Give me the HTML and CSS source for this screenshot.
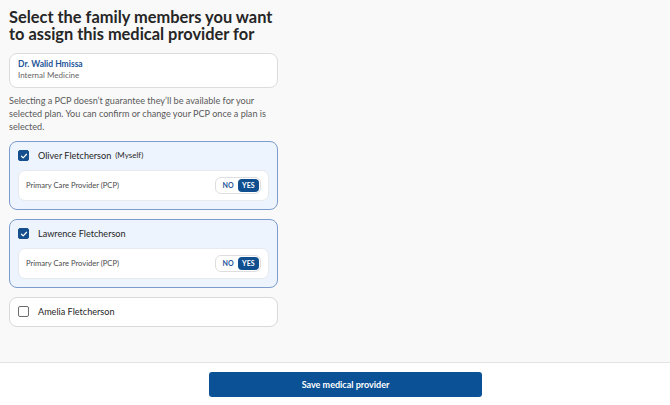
FILE: index.html
```html
<!DOCTYPE html>
<html>
<head>
<meta charset="utf-8">
<link rel="stylesheet" href="styles.css">
</head>
<body>
<div class="page">
  <main class="main">
    <h1 class="title">Select the family members you want to assign this medical provider for</h1>
    <div class="provider">
      <div class="provider-name">Dr. Walid Hmissa</div>
      <div class="provider-spec">Internal Medicine</div>
    </div>
    <p class="note">Selecting a PCP doesn’t guarantee they’ll be available for your selected plan. You can confirm or change your PCP once a plan is selected.</p>
    <div class="members">
      <div class="member selected">
        <div class="member-head">
          <span class="check on"><svg viewBox="0 0 12 12" width="8" height="8"><path d="M2.2 6.3 L4.8 8.8 L9.8 3.4" fill="none" stroke="#fff" stroke-width="1.8" stroke-linecap="round" stroke-linejoin="round"/></svg></span>
          <span class="member-name">Oliver Fletcherson</span>
          <span class="myself">(Myself)</span>
        </div>
        <div class="pcp">
          <span class="pcp-label">Primary Care Provider (PCP)</span>
          <span class="toggle"><span class="opt">NO</span><span class="opt active">YES</span></span>
        </div>
      </div>
      <div class="member selected">
        <div class="member-head">
          <span class="check on"><svg viewBox="0 0 12 12" width="8" height="8"><path d="M2.2 6.3 L4.8 8.8 L9.8 3.4" fill="none" stroke="#fff" stroke-width="1.8" stroke-linecap="round" stroke-linejoin="round"/></svg></span>
          <span class="member-name">Lawrence Fletcherson</span>
        </div>
        <div class="pcp">
          <span class="pcp-label">Primary Care Provider (PCP)</span>
          <span class="toggle"><span class="opt">NO</span><span class="opt active">YES</span></span>
        </div>
      </div>
      <div class="member">
        <div class="member-head">
          <span class="check"></span>
          <span class="member-name">Amelia Fletcherson</span>
        </div>
      </div>
    </div>
  </main>
  <footer class="footer">
    <button class="save">Save medical provider</button>
  </footer>
</div>
</body>
</html>
```

FILE: styles.css
```css
* { box-sizing: border-box; }
html, body { margin: 0; padding: 0; }
body {
  font-family: Lato, "Noto Sans", "Liberation Sans", sans-serif;
  color: #2b2b2b;
  background: #fff;
}
.page {
  width: 670px;
  height: 405px;
  display: flex;
  flex-direction: column;
}
.main {
  flex: 1;
  background: #f9f9f9;
  padding: 8px 9px 0 9px;
  border-bottom: 1px solid #e3e3e3;
}
.title {
  width: 269px;
  margin: 0;
  font-size: 16.4px;
  line-height: 17px;
  font-weight: 700;
  color: #262626;
  letter-spacing: 0;
}
.provider {
  width: 269px;
  margin-top: 11px;
  height: 35px;
  background: #fff;
  border: 1px solid #dcdcdc;
  border-radius: 8px;
  padding: 5px 8px;
}
.provider-name {
  font-size: 8.5px;
  font-weight: 700;
  color: #1d5598;
  line-height: 11px;
}
.provider-spec {
  font-size: 8px;
  color: #666;
  line-height: 11px;
}
.note {
  width: 269px;
  margin: 6px 0 0 0;
  font-size: 9.1px;
  line-height: 13.2px;
  color: #5a5a5a;
}
.members {
  width: 269px;
  margin-top: 7px;
  display: flex;
  flex-direction: column;
  gap: 9px;
}
.member {
  background: #fff;
  border: 1px solid #d9d9d9;
  border-radius: 8px;
  padding: 0 8px;
}
.member.selected {
  background: #eef4fd;
  border: 1.5px solid #7b9ccc;
  padding-bottom: 8px;
}
.member-head {
  height: 28px;
  display: flex;
  align-items: center;
  padding-left: 0;
}
.check {
  width: 11px;
  height: 11px;
  border: 1.2px solid #6e6e6e;
  border-radius: 2px;
  background: #fff;
  display: flex;
  align-items: center;
  justify-content: center;
  margin-right: 9px;
  flex: none;
}
.check.on {
  background: #164f8e;
  border-color: #164f8e;
}
.member-name {
  font-size: 9.1px;
  color: #1f1f1f;
}
.myself {
  font-size: 8px;
  color: #2a2a2a;
  margin-left: 4px;
  position: relative;
  top: -1px;
}
.pcp {
  height: 31px;
  background: #fff;
  border: 1px solid #e6e9ee;
  border-radius: 7px;
  display: flex;
  align-items: center;
  justify-content: space-between;
  padding: 0 7px 0 7px;
}
.pcp-label {
  font-size: 7.6px;
  color: #4a4a4a;
}
.toggle {
  display: flex;
  align-items: center;
  height: 17px;
  border: 1px solid #dedede;
  border-radius: 6px;
  padding: 0 1px 0 7px;
  gap: 4px;
}
.opt {
  font-size: 7px;
  font-weight: 700;
  color: #1d5598;
}
.opt.active {
  background: #0f4f8f;
  color: #fff;
  border-radius: 4px;
  padding: 2px 4.5px;
  line-height: 9px;
}
.footer {
  height: 42px;
  background: #fff;
  display: flex;
  justify-content: center;
  align-items: flex-start;
  padding-top: 9px;
}
.save {
  width: 273px;
  height: 25px;
  background: #0b5196;
  color: #fff;
  border: none;
  border-radius: 3px;
  font-family: Lato, "Noto Sans", "Liberation Sans", sans-serif;
  font-size: 9px;
  font-weight: 700;
  margin-left: 21px;
}
```
